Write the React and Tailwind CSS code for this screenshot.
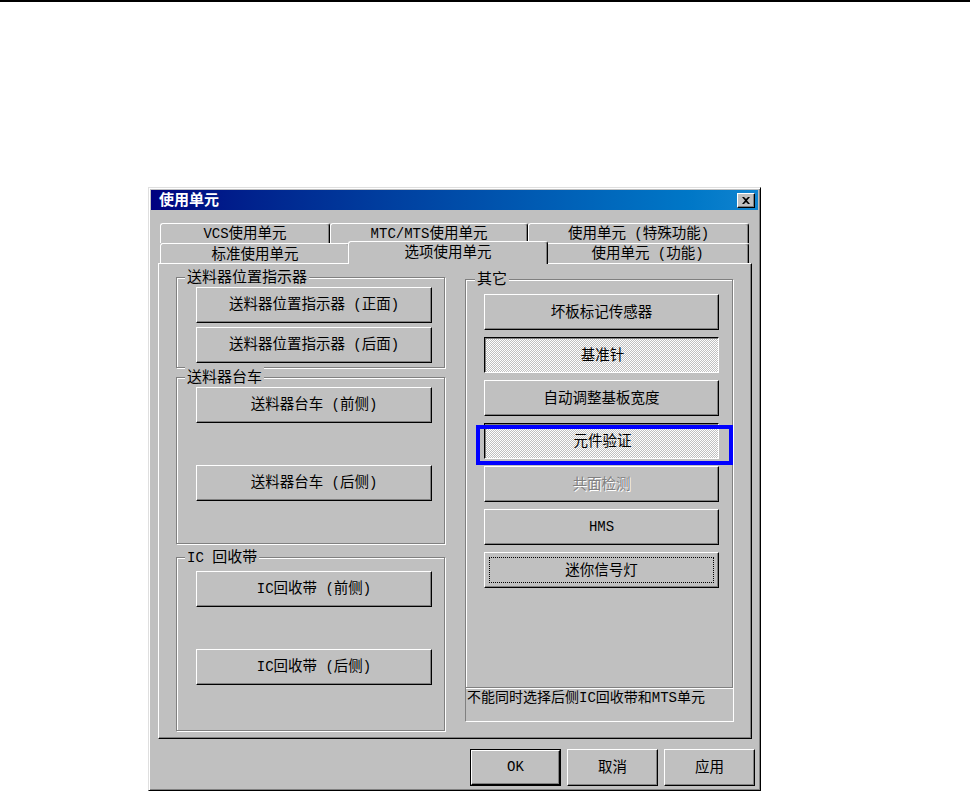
import React from "react";

const raised =
  "border border-t-white border-l-white border-r-black border-b-black shadow-[inset_-1px_-1px_0_#808080]";
const checked =
  "border border-t-black border-l-black border-r-white border-b-white shadow-[inset_1px_1px_0_#808080] bg-[conic-gradient(#ffffff_25%,#c0c0c0_0_50%,#ffffff_0_75%,#c0c0c0_0)] bg-size-[2px_2px]";

function T({ s }) {
  const parts = s.split(/([\x20-\x7e]+)/).filter((p) => p !== "");
  return parts.map((p, i) =>
    /^[\x20-\x7e]+$/.test(p) ? (
      <span
        key={i}
        className="font-['Liberation_Mono',monospace] text-[14px] whitespace-pre"
      >
        {p}
      </span>
    ) : (
      <React.Fragment key={i}>{p}</React.Fragment>
    )
  );
}

function Btn({ label, className = "", state = "normal", focus = false }) {
  const base =
    "relative flex items-center justify-center shrink-0 text-[14.5px] leading-[20px] whitespace-nowrap";
  if (state === "checked") {
    return (
      <div className={`${base} ${checked} pl-[2px] pb-[2px] ${className}`}>
        <span>
          <T s={label} />
        </span>
      </div>
    );
  }
  if (state === "disabled") {
    return (
      <div
        className={`${base} ${raised} bg-[#c0c0c0] pb-[3px] text-[#808080] [text-shadow:1px_1px_0_#ffffff] ${className}`}
      >
        <span>
          <T s={label} />
        </span>
      </div>
    );
  }
  return (
    <div className={`${base} ${raised} bg-[#c0c0c0] pb-[3px] ${className}`}>
      {focus && (
        <div className="absolute inset-[4px] border border-dotted border-black" />
      )}
      <span>
        <T s={label} />
      </span>
    </div>
  );
}

function Group({ label, className = "", labelLeft = "left-[8px]", children }) {
  return (
    <div
      className={`relative shrink-0 border border-[#808080] shadow-[1px_1px_0_#ffffff,inset_1px_1px_0_#ffffff] ${className}`}
    >
      <span
        className={`absolute -top-[12px] ${labelLeft} px-[2px] bg-[#c0c0c0] text-[15px] leading-[20px] whitespace-nowrap`}
      >
        <T s={label} />
      </span>
      {children}
    </div>
  );
}

const tabBase =
  "flex items-center justify-center shrink-0 bg-[#c0c0c0] border-t border-l border-r border-t-white border-l-white border-r-black shadow-[inset_-1px_0_0_#808080] rounded-tl-[3px] rounded-tr-[3px] text-[14.5px] leading-[18px] whitespace-nowrap";

function Tab({ label, className = "pb-[2px]" }) {
  return (
    <div className={`${tabBase} ${className}`}>
      <span>
        <T s={label} />
      </span>
    </div>
  );
}

export default function App() {
  return (
    <div className="w-[970px] h-[791px] overflow-hidden bg-white text-black font-['Noto_Sans_CJK_SC',sans-serif]">
      <div className="h-[2px] bg-black" />
      <div className="ml-[148px] mt-[185px] w-[613px] h-[604px] flex flex-col bg-[#c0c0c0] border border-t-[#dfdfdf] border-l-[#dfdfdf] border-r-black border-b-black shadow-[inset_1px_1px_0_#ffffff,inset_-1px_-1px_0_#808080] p-[2px]">
        {/* Title bar */}
        <div className="h-[20px] shrink-0 flex items-center justify-between bg-linear-to-r from-[#000080] to-[#1084d0] pl-[8px] pr-[3px]">
          <span className="text-white font-bold text-[15px] leading-[20px] pb-[2px]">
            使用单元
          </span>
          <div
            className={`w-[18px] h-[15px] flex items-center justify-center bg-[#c0c0c0] ${raised}`}
          >
            <svg width="8" height="7" viewBox="0 0 8 7" className="block">
              <path
                d="M0 0H2L4 2L6 0H8L5 3.5L8 7H6L4 5L2 7H0L3 3.5Z"
                fill="#000"
              />
            </svg>
          </div>
        </div>

        {/* Tabs */}
        <div className="mt-[13px] ml-[7px] w-[594px] shrink-0">
          <div className="flex h-[20px] pl-[2px]">
            <Tab label="VCS使用单元" className="w-[170px] pb-[2px]" />
            <Tab label="MTC/MTS使用单元" className="w-[198px] pb-[2px]" />
            <Tab label="使用单元 (特殊功能)" className="w-[221px] pb-[2px]" />
          </div>
          <div className="flex h-[20px] pl-[2px]">
            <Tab label="标准使用单元" className="w-[190px] pb-[2px]" />
            <Tab
              label="选项使用单元"
              className="relative z-10 -mx-[2px] -mt-[2px] h-[23px] w-[200px] pb-[4px]"
            />
            <Tab label="使用单元 (功能)" className="w-[203px] pb-[2px]" />
          </div>

          {/* Panel */}
          <div
            className={`h-[476px] flex items-start pl-[17px] pt-[13px] bg-[#c0c0c0] ${raised}`}
          >
            {/* Left column */}
            <div className="flex flex-col w-[269px]">
              <Group
                label="送料器位置指示器"
                className="h-[91px] pt-[9px] pl-[19px] flex flex-col gap-[4px]"
              >
                <Btn className="w-[236px] h-[36px]" label="送料器位置指示器 (正面)" />
                <Btn className="w-[236px] h-[36px]" label="送料器位置指示器 (后面)" />
              </Group>
              <Group
                label="送料器台车"
                className="mt-[9px] h-[167px] pt-[9px] pl-[19px] flex flex-col gap-[42px]"
              >
                <Btn className="w-[236px] h-[36px]" label="送料器台车 (前侧)" />
                <Btn className="w-[236px] h-[36px]" label="送料器台车 (后侧)" />
              </Group>
              <Group
                label="IC 回收带"
                className="mt-[13px] h-[174px] pt-[13px] pl-[19px] flex flex-col gap-[42px]"
              >
                <Btn className="w-[236px] h-[36px]" label="IC回收带 (前侧)" />
                <Btn className="w-[236px] h-[36px]" label="IC回收带 (后侧)" />
              </Group>
            </div>

            {/* Right column */}
            <div className="ml-[20px] mt-[2px] w-[269px] flex flex-col">
              <Group
                label="其它"
                labelLeft="left-[9px]"
                className="w-[268px] h-[409px] pt-[14px] pl-[18px] flex flex-col gap-[7px]"
              >
                <Btn className="w-[235px] h-[36px]" label="坏板标记传感器" />
                <Btn className="w-[235px] h-[36px]" state="checked" label="基准针" />
                <Btn className="w-[235px] h-[36px]" label="自动调整基板宽度" />
                <Btn className="w-[235px] h-[36px]" state="checked" label="元件验证" />
                <Btn className="w-[235px] h-[36px]" state="disabled" label="共面检测" />
                <Btn className="w-[235px] h-[36px]" label="HMS" />
                <Btn className="w-[235px] h-[36px]" focus label="迷你信号灯" />
                <div className="absolute left-[10px] top-[145px] w-[257px] h-[40px] border-[4px] border-[#0000ff]" />
              </Group>
              <div className="w-[269px] h-[34px] border-l border-r border-b border-l-[#808080] border-r-white border-b-white pl-[1px] text-[14px] leading-[17px] whitespace-nowrap">
                <T s="不能同时选择后侧IC回收带和MTS单元" />
              </div>
            </div>
          </div>
        </div>

        {/* Bottom buttons */}
        <div className="mt-[10px] flex justify-end gap-[6px] pr-[3px]">
          <div className="w-[91px] h-[37px] border border-black flex">
            <Btn className="flex-1 h-full" label="OK" />
          </div>
          <Btn className="w-[91px] h-[37px]" label="取消" />
          <Btn className="w-[91px] h-[37px]" label="应用" />
        </div>
      </div>
    </div>
  );
}
